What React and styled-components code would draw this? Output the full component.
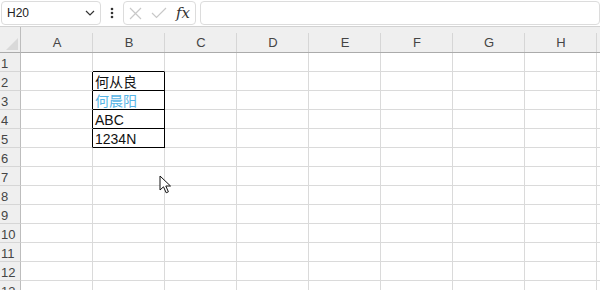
import React from "react";
import styled, { createGlobalStyle } from "styled-components";

const Global = createGlobalStyle`
  html, body {
    margin: 0;
    padding: 0;
    background: #fff;
    overflow: hidden;
  }
  body {
    width: 600px;
    height: 290px;
    font-family: "Liberation Sans", "Noto Sans CJK SC", sans-serif;
  }
`;

const Page = styled.div`
  position: relative;
  width: 600px;
  height: 290px;
  overflow: hidden;
  background: #fff;
`;

const Toolbar = styled.div`
  box-sizing: border-box;
  height: 27px;
  display: flex;
  align-items: flex-start;
  padding-top: 1px;
  padding-left: 1px;
  border-bottom: 1px solid #d2d2d2;
`;

const Box = styled.div`
  box-sizing: border-box;
  height: 24px;
  width: ${(p) => p.$w};
  flex: ${(p) => (p.$grow ? "1" : "none")};
  border: 1px solid #dcdcdc;
  border-radius: 4px;
  display: flex;
  align-items: center;
  padding: 0 5px;
  margin-right: ${(p) => p.$mr || "0"};
`;

const NameText = styled.span`
  font-size: 12px;
  color: #222;
  flex: 1;
`;

const Dots = styled.div`
  width: 22px;
  height: 24px;
  display: flex;
  align-items: center;
  justify-content: center;
`;

const Fx = styled.span`
  font-family: "DejaVu Serif", "Liberation Serif", serif;
  font-style: italic;
  font-size: 15px;
  color: #333;
  margin-left: auto;
  line-height: 1;
`;

const Sheet = styled.div`
  display: grid;
  grid-template-columns: 21px repeat(9, 72px);
  grid-template-rows: 26px;
  grid-auto-rows: 19px;
`;

const Corner = styled.div`
  box-sizing: border-box;
  background: #efefef;
  border-right: 1px solid #bdbdbd;
  border-bottom: 1px solid #ababab;
  display: flex;
  align-items: flex-end;
  justify-content: flex-end;
  padding: 0 2px 2px 0;
`;

const ColHead = styled.div`
  position: relative;
  box-sizing: border-box;
  background: #efefef;
  border-bottom: 1px solid #ababab;
  color: #454545;
  font-size: 13px;
  display: flex;
  align-items: flex-end;
  justify-content: center;
  padding-bottom: 2px;
  &::after {
    content: "";
    position: absolute;
    right: 0;
    top: 6px;
    bottom: 0;
    width: 1px;
    background: #d6d6d6;
  }
`;

const RowHead = styled.div`
  box-sizing: border-box;
  background: #efefef;
  border-right: 1px solid #bdbdbd;
  border-bottom: 1px solid #d6d6d6;
  color: #454545;
  font-size: 13px;
  display: flex;
  align-items: flex-end;
  padding: 0 0 1px 1px;
  line-height: 1;
`;

const Cell = styled.div`
  box-sizing: border-box;
  border-right: 1px solid ${(p) => (p.$rb ? "#000" : "#dadada")};
  border-bottom: 1px solid ${(p) => (p.$bb ? "#000" : "#dadada")};
  font-size: 14px;
  color: ${(p) => p.$color || "#111"};
  display: flex;
  align-items: flex-end;
  padding: 0 0 1px 2px;
  line-height: 1;
  white-space: nowrap;
  overflow: hidden;
`;

const Cursor = styled.svg`
  position: absolute;
  left: 159px;
  top: 175px;
`;

const cols = ["A", "B", "C", "D", "E", "F", "G", "H", ""];
const data = { 2: "何从良", 3: "何晨阳", 4: "ABC", 5: "1234N" };

export default function App() {
  const rows = Array.from({ length: 14 }, (_, i) => i + 1);
  return (
    <Page>
      <Global />
      <Toolbar>
        <Box $w="100px">
          <NameText>H20</NameText>
          <svg width="10" height="6" viewBox="0 0 10 6">
            <path d="M1 1 L5 5 L9 1" fill="none" stroke="#333" strokeWidth="1.2" />
          </svg>
        </Box>
        <Dots>
          <svg width="4" height="14" viewBox="0 0 4 14">
            <circle cx="2" cy="3" r="1.3" fill="#333" />
            <circle cx="2" cy="7" r="1.3" fill="#333" />
            <circle cx="2" cy="11" r="1.3" fill="#333" />
          </svg>
        </Dots>
        <Box $w="73px" $mr="4px">
          <svg width="13" height="13" viewBox="0 0 13 13">
            <path d="M1 1 L12 12 M12 1 L1 12" stroke="#c8c8c8" strokeWidth="1.2" />
          </svg>
          <svg width="16" height="12" viewBox="0 0 16 12" style={{ marginLeft: 9 }}>
            <path d="M1 6 L5.5 10.5 L15 1" fill="none" stroke="#c8c8c8" strokeWidth="1.2" />
          </svg>
          <Fx>fx</Fx>
        </Box>
        <Box $grow />
      </Toolbar>
      <Sheet>
        <Corner>
          <svg width="12" height="12" viewBox="0 0 12 12">
            <path d="M12 0 L12 12 L0 12 Z" fill="#d9d9d9" />
          </svg>
        </Corner>
        {cols.map((c, i) => (
          <ColHead key={i}>{c}</ColHead>
        ))}
        {rows.map((r) => (
          <React.Fragment key={r}>
            <RowHead>{r}</RowHead>
            {cols.map((c, i) => {
              const inBox = i === 1 && r >= 2 && r <= 5;
              return (
                <Cell
                  key={i}
                  $rb={inBox || (i === 0 && r >= 2 && r <= 5)}
                  $bb={inBox || (i === 1 && r === 1)}
                  $color={inBox && r === 3 ? "#56b4e6" : undefined}
                >
                  {inBox ? data[r] : ""}
                </Cell>
              );
            })}
          </React.Fragment>
        ))}
      </Sheet>
      <Cursor width="14" height="20" viewBox="0 0 14 20">
        <path
          d="M1 1 L1 15 L4.5 11.8 L7.2 17.8 L9.4 16.8 L6.8 11 L11.5 11 Z"
          fill="#fff"
          stroke="#111"
          strokeWidth="1"
          strokeLinejoin="round"
        />
      </Cursor>
    </Page>
  );
}
